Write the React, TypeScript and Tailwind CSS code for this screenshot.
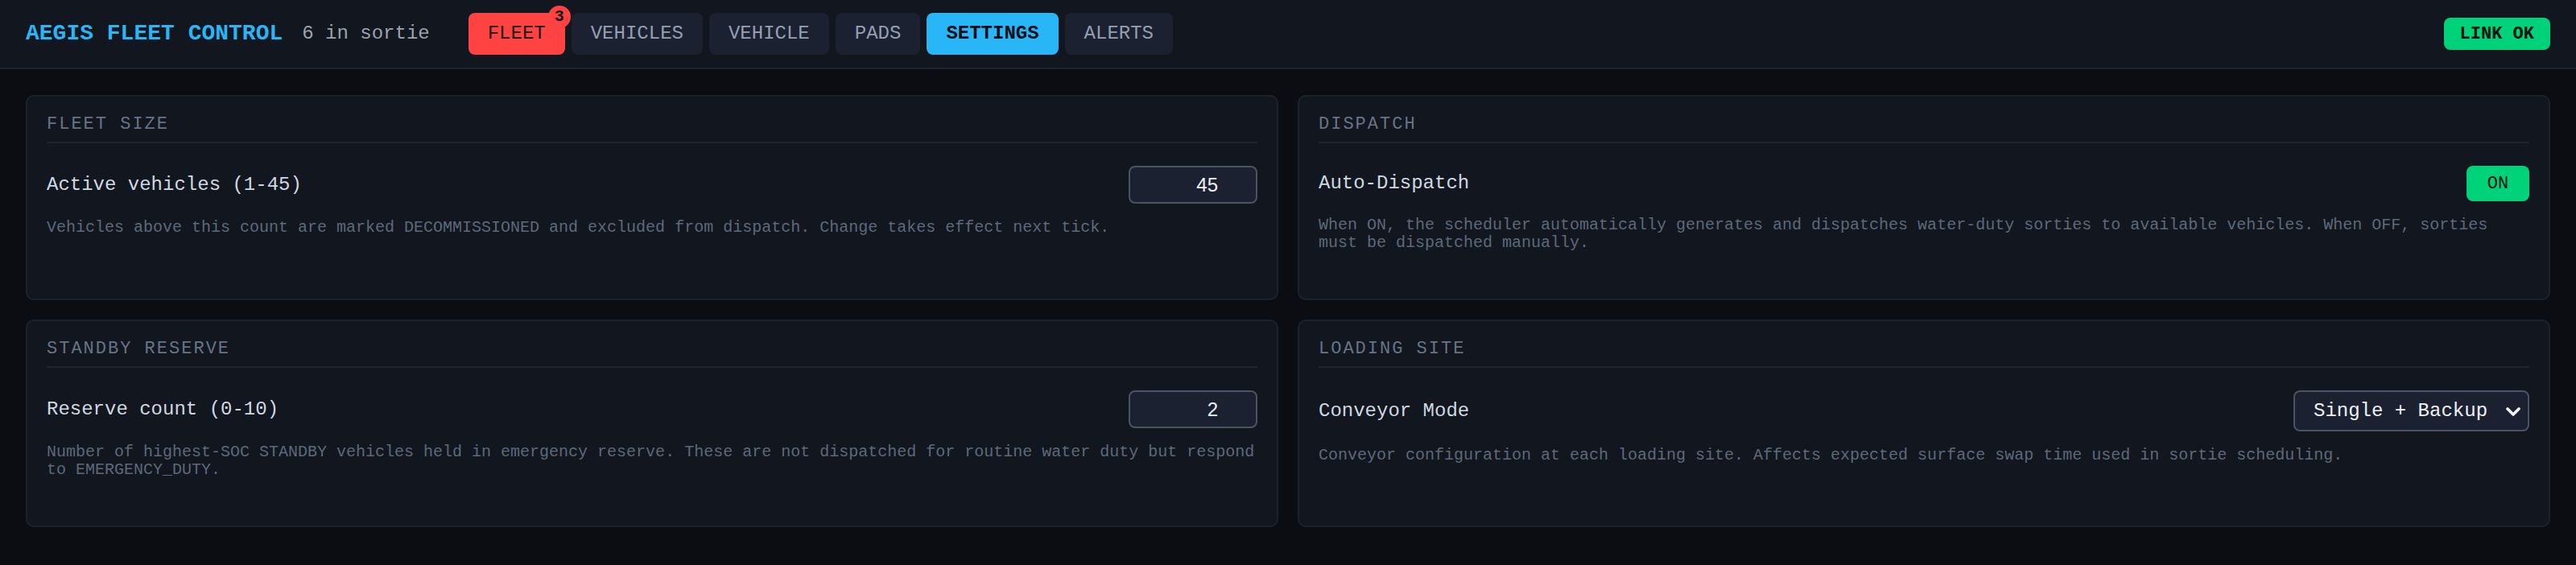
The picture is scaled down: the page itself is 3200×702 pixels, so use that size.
import React from "react";

const mono = { fontFamily: '"Liberation Mono", "DejaVu Sans Mono", monospace' };

type Tab = { label: string; tone: "alert" | "active" | "idle"; badge?: number };

const tabs: Tab[] = [
  { label: "FLEET", tone: "alert", badge: 3 },
  { label: "VEHICLES", tone: "idle" },
  { label: "VEHICLE", tone: "idle" },
  { label: "PADS", tone: "idle" },
  { label: "SETTINGS", tone: "active" },
  { label: "ALERTS", tone: "idle" },
];

function TabButton({ tab }: { tab: Tab }) {
  const tone =
    tab.tone === "alert"
      ? "bg-[#ff4242] text-[#161616]"
      : tab.tone === "active"
      ? "bg-[#29b6f6] text-[#0b1018] font-bold"
      : "bg-[#1b2130] text-[#94a0b2]";
  return (
    <div className={`relative flex h-[52px] items-center rounded-[8px] px-[24px] text-[24px] ${tone}`}>
      {tab.label}
      {tab.badge !== undefined && (
        <span className="absolute -right-[7px] -top-[9px] flex h-[28px] w-[28px] items-center justify-center rounded-full bg-[#ff4242] text-[20px] font-bold text-[#161616]">
          {tab.badge}
        </span>
      )}
    </div>
  );
}

function Card({
  title,
  label,
  control,
  description,
}: {
  title: string;
  label: string;
  control: React.ReactNode;
  description: string;
}) {
  return (
    <section className="rounded-[10px] border-2 border-[#1c222d] bg-[#12161f] px-[24px] pb-[58px] pt-[22px]">
      <h2 className="border-b-2 border-[#1e2531] pb-[8px] text-[22px] leading-[26px] tracking-[2px] text-[#677386]">
        {title}
      </h2>
      <div className="mt-[28px] flex items-center justify-between">
        <span className="text-[24px] leading-[36px] text-[#d0d8e2]">{label}</span>
        {control}
      </div>
      <p className="mt-[19px] text-[20px] leading-[22px] text-[#5d697a]">{description}</p>
    </section>
  );
}

function NumberBox({ value }: { value: string }) {
  return (
    <div
      className="flex h-[47px] w-[160px] items-center justify-end rounded-[8px] border-2 border-[#4a5361] bg-[#1b2130] pr-[47px] text-[24px] text-[#eef1f5]"
      style={{ fontFamily: '"Liberation Sans", Arial, sans-serif' }}
    >
      {value}
    </div>
  );
}

function Toggle() {
  return (
    <div className="flex h-[44px] w-[78px] items-center justify-center rounded-[8px] bg-[#00d27a] text-[22px] text-[#08120c]">
      ON
    </div>
  );
}

function SelectBox({ value }: { value: string }) {
  return (
    <div className="flex h-[51px] w-[293px] items-center justify-between rounded-[8px] border-2 border-[#4a5361] bg-[#1b2130] pl-[23px] pr-[8px] text-[24px] text-[#eef1f5]">
      <span>{value}</span>
      <svg width="20" height="14" viewBox="0 0 20 14" fill="none">
        <polyline points="3,4 10,11 17,4" stroke="#eef1f5" strokeWidth="3.6" strokeLinecap="round" strokeLinejoin="round" />
      </svg>
    </div>
  );
}

export default function App() {
  return (
    <div className="min-h-screen bg-[#0b0d13]" style={mono}>
      <header className="flex h-[86px] items-center border-b-2 border-[#1e2430] bg-[#12161f] px-[32px]">
        <span className="text-[28px] font-bold text-[#29b6f6]">AEGIS FLEET CONTROL</span>
        <span className="ml-[24px] text-[24px] text-[#9aa3ae]">6 in sortie</span>
        <nav className="ml-[48px] flex gap-[8px]">
          {tabs.map((t) => (
            <TabButton key={t.label} tab={t} />
          ))}
        </nav>
        <span className="ml-auto flex h-[40px] items-center rounded-[8px] bg-[#00d27a] px-[20px] text-[22px] font-bold text-[#08120c]">
          LINK OK
        </span>
      </header>

      <main className="grid grid-cols-2 gap-[24px] px-[32px] pt-[32px]">
        <Card
          title="FLEET SIZE"
          label="Active vehicles (1-45)"
          control={<NumberBox value="45" />}
          description="Vehicles above this count are marked DECOMMISSIONED and excluded from dispatch. Change takes effect next tick."
        />
        <Card
          title="DISPATCH"
          label="Auto-Dispatch"
          control={<Toggle />}
          description="When ON, the scheduler automatically generates and dispatches water-duty sorties to available vehicles. When OFF, sorties must be dispatched manually."
        />
        <Card
          title="STANDBY RESERVE"
          label="Reserve count (0-10)"
          control={<NumberBox value="2" />}
          description="Number of highest-SOC STANDBY vehicles held in emergency reserve. These are not dispatched for routine water duty but respond to EMERGENCY_DUTY."
        />
        <Card
          title="LOADING SITE"
          label="Conveyor Mode"
          control={<SelectBox value="Single + Backup" />}
          description="Conveyor configuration at each loading site. Affects expected surface swap time used in sortie scheduling."
        />
      </main>
    </div>
  );
}
